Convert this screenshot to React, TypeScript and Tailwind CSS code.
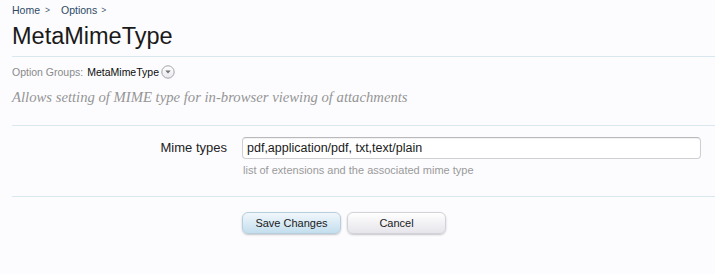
import React from "react";

function DropCircle() {
  return (
    <svg width="14" height="14" viewBox="0 0 14 14" className="ml-[2px] shrink-0">
      <defs>
        <linearGradient id="cg" x1="0" y1="0" x2="0" y2="1">
          <stop offset="0" stopColor="#ffffff" />
          <stop offset="1" stopColor="#e9e9ee" />
        </linearGradient>
      </defs>
      <circle cx="7" cy="7" r="6.2" fill="url(#cg)" stroke="#a3a3a8" strokeWidth="1" />
      <path d="M4.3 5.6 L9.7 5.6 L7 8.6 Z" fill="#6f6f75" />
    </svg>
  );
}

export default function App() {
  const sans = { fontFamily: '"Liberation Sans", Arial, sans-serif' };
  return (
    <div
      className="w-[715px] h-[274px] overflow-hidden bg-[#fcfcfe] pl-[12px]"
      style={sans}
    >
      <div className="mt-[3px] h-[14px] leading-[14px] text-[10.5px] text-[#2c4a66] flex items-center">
        <span>Home</span>
        <span className="ml-[5px] text-[8.5px] text-[#4a5a6a]">&gt;</span>
        <span className="ml-[11px]">Options</span>
        <span className="ml-[4px] text-[8.5px] text-[#4a5a6a]">&gt;</span>
      </div>
      <div className="border-b border-[#d9e7ee] pb-[6px]">
        <h1 className="mt-[5px] text-[23.5px] leading-[28px] text-[#1a1a1a] font-normal">
          MetaMimeType
        </h1>
      </div>
      <div className="mt-[7px] h-[16px] flex items-center text-[10.5px] leading-[16px]">
        <span className="text-[#8a8a8a]">Option Groups:</span>
        <span className="ml-[4px] text-[#0c0c0c]">MetaMimeType</span>
        <DropCircle />
      </div>
      <div
        className="mt-[7px] h-[20px] leading-[20px] text-[14.7px] italic text-[#959595]"
        style={{ fontFamily: '"Liberation Serif", "Times New Roman", serif' }}
      >
        Allows setting of MIME type for in-browser viewing of attachments
      </div>
      <div className="mt-[18px] border-t border-b border-[#d9e7ee] pt-[11px] pb-[19px] pr-[14px]">
        <div className="flex items-center">
          <div className="w-[215px] text-right text-[13px] text-[#222]">Mime types</div>
          <div className="ml-[15px] flex-1 h-[22px] rounded-[4px] border border-[#cfcfd2] border-t-[#b9b9bd] bg-white shadow-[inset_0_1px_1px_rgba(0,0,0,0.06)] flex items-center pl-[4px] text-[12.5px] text-[#1a1a1a]">
            pdf,application/pdf, txt,text/plain
          </div>
        </div>
        <div className="ml-[231px] mt-[4px] h-[14px] leading-[14px] text-[11px] text-[#9a9a9a]">
          list of extensions and the associated mime type
        </div>
      </div>
      <div className="mt-[15px] flex pl-[230px]">
        <button className="w-[99px] h-[22px] rounded-[6px] border border-[#b7cfdd] bg-linear-to-b from-[#f1f7fb] to-[#c3deee] shadow-[0_1px_2px_rgba(0,0,0,0.22)] text-[11px] text-[#1a1a1a]">
          Save Changes
        </button>
        <button className="ml-[6px] w-[99px] h-[22px] rounded-[6px] border border-[#d2d2d8] bg-linear-to-b from-[#ffffff] to-[#e5e5eb] shadow-[0_1px_2px_rgba(0,0,0,0.22)] text-[11px] text-[#1a1a1a]">
          Cancel
        </button>
      </div>
    </div>
  );
}
